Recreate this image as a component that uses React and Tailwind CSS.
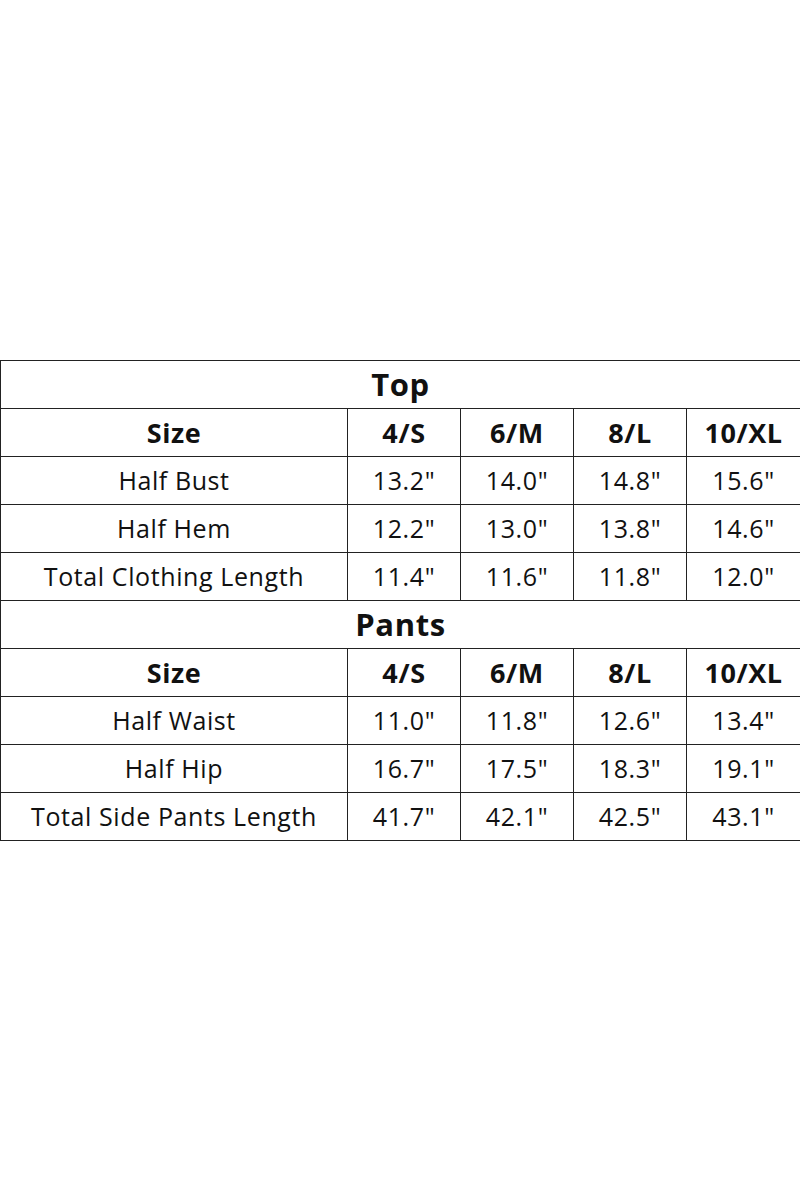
const top = [
  ['Half Bust', '13.2"', '14.0"', '14.8"', '15.6"'],
  ['Half Hem', '12.2"', '13.0"', '13.8"', '14.6"'],
  ['Total Clothing Length', '11.4"', '11.6"', '11.8"', '12.0"'],
];

const pants = [
  ['Half Waist', '11.0"', '11.8"', '12.6"', '13.4"'],
  ['Half Hip', '16.7"', '17.5"', '18.3"', '19.1"'],
  ['Total Side Pants Length', '41.7"', '42.1"', '42.5"', '43.1"'],
];

const sizes = ['Size', '4/S', '6/M', '8/L', '10/XL'];

function Section({ title, rows }) {
  return (
    <>
      <tr className="h-[48px]">
        <td colSpan={5} className="border border-[#222] text-center text-[31px] font-bold">
          {title}
        </td>
      </tr>
      <tr className="h-[48px]">
        {sizes.map((s) => (
          <td key={s} className="border border-[#222] text-center text-[27px] font-bold">
            {s}
          </td>
        ))}
      </tr>
      {rows.map((r) => (
        <tr key={r[0]} className="h-[48px]">
          {r.map((c, i) => (
            <td key={i} className="border border-[#222] text-center text-[25px]">
              {c}
            </td>
          ))}
        </tr>
      ))}
    </>
  );
}

export default function App() {
  return (
    <div
      className="h-[1200px] w-[800px] bg-white flex items-center text-[#111]"
      style={{ fontFamily: '"Open Sans", "Noto Sans", sans-serif' }}
    >
      <table className="w-[800px] border-collapse table-fixed leading-none tracking-[0.6px]">
        <colgroup>
          <col className="w-[347px]" />
          <col className="w-[113px]" />
          <col className="w-[113px]" />
          <col className="w-[113px]" />
          <col className="w-[114px]" />
        </colgroup>
        <tbody>
          <Section title="Top" rows={top} />
          <Section title="Pants" rows={pants} />
        </tbody>
      </table>
    </div>
  );
}
